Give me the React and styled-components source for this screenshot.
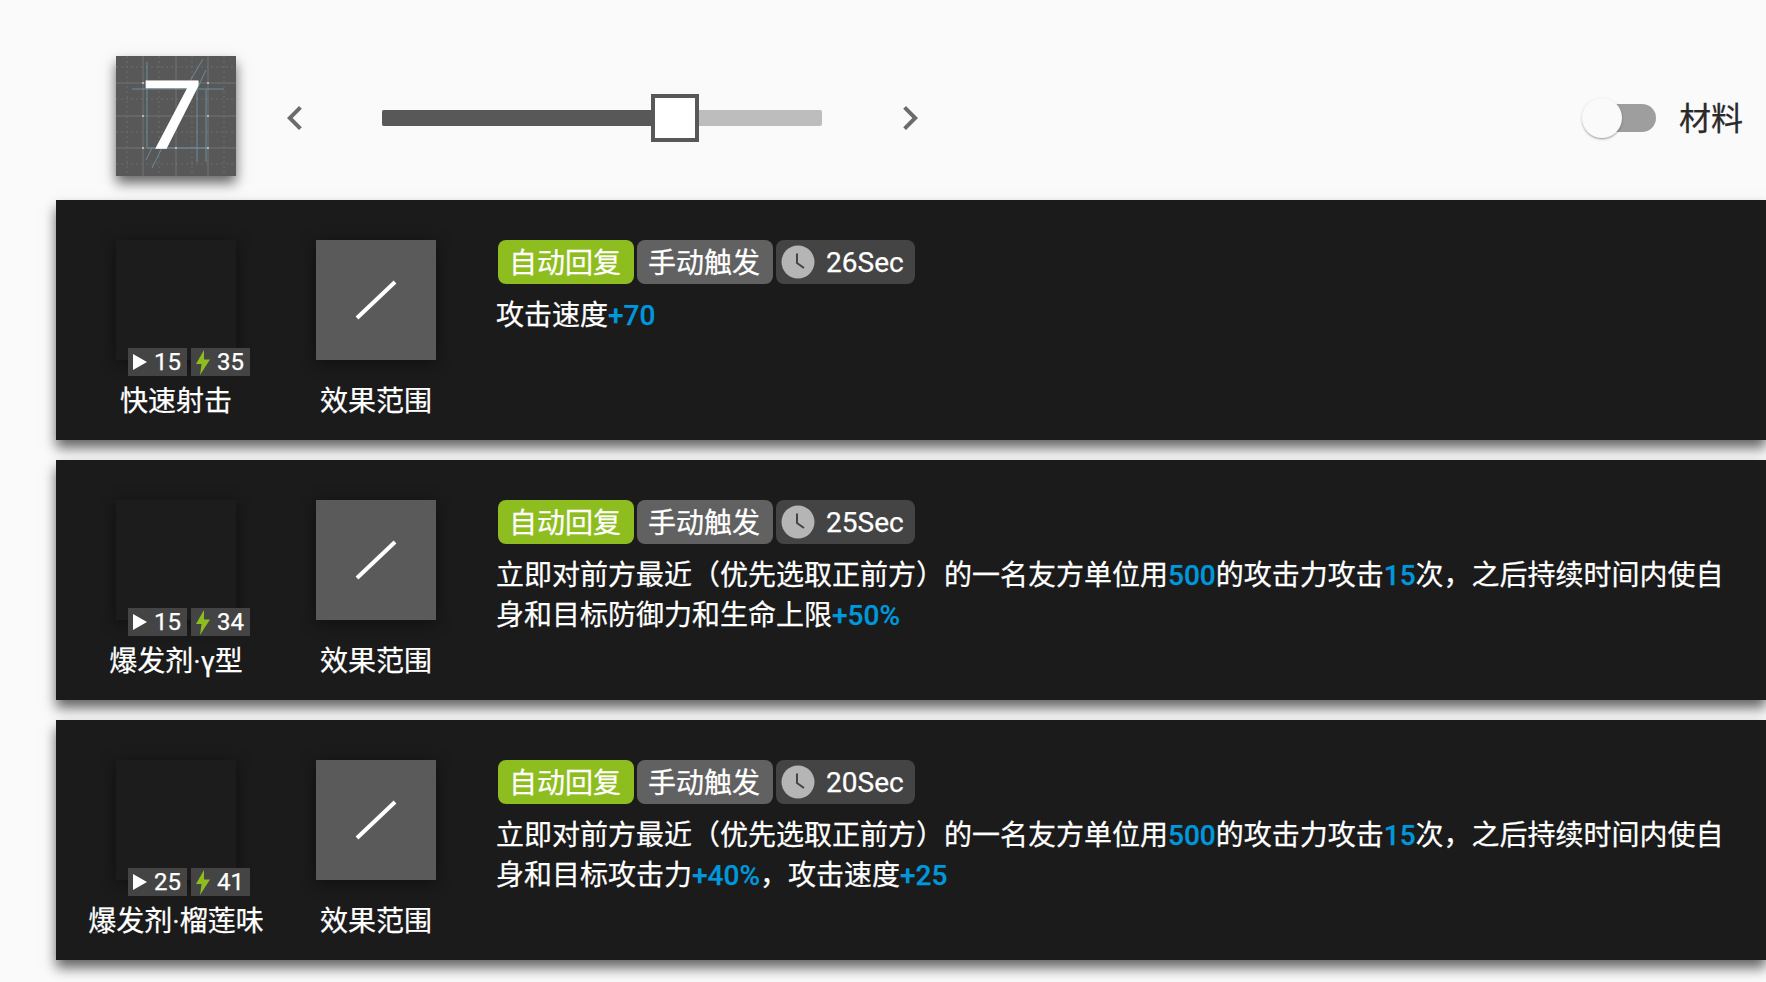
import React from "react";
import styled, { createGlobalStyle } from "styled-components";

const GlobalStyle = createGlobalStyle`
  html, body {
    margin: 0;
    padding: 0;
    background: #fafafa;
    overflow: hidden;
    font-family: Roboto, "Noto Sans CJK SC", sans-serif;
  }
`;

const Page = styled.div`
  width: 1766px;
  height: 982px;
  overflow: hidden;
  background: #fafafa;
  -webkit-text-stroke: 0.25px currentColor;
`;

const Header = styled.div`
  display: flex;
  align-items: center;
  height: 116px;
  padding: 60px 23px 24px 116px;
`;

const LevelIcon = styled.div`
  width: 120px;
  height: 120px;
  flex: none;
  align-self: flex-start;
  margin: -4px 51px 0 0;
  background: #585858;
  box-shadow: 0 7px 12px rgba(0, 0, 0, 0.6);
`;

const Seven = styled.text`
  font-family: Roboto, sans-serif;
  font-size: 94px;
  fill: #fff;
  stroke: #fff;
  stroke-width: 0.7px;
`;

const Chevron = styled.svg`
  width: 16px;
  height: 24px;
  flex: none;
  fill: #6b6b6b;
`;

const Slider = styled.div`
  position: relative;
  width: 440px;
  height: 16px;
  margin: 0 80px 0 79px;
  background: #bdbdbd;
  border-radius: 2px;
`;

const SliderFill = styled.div`
  height: 100%;
  background: #585858;
  border-radius: 2px 0 0 2px;
`;

const SliderThumb = styled.div`
  position: absolute;
  left: 269px;
  top: -16px;
  width: 48px;
  height: 48px;
  box-sizing: border-box;
  border: 4px solid #585858;
  background: #fff;
`;

const Toggle = styled.div`
  position: relative;
  width: 74px;
  height: 40px;
  margin-left: auto;
  display: flex;
  align-items: center;
  justify-content: flex-end;
`;

const ToggleTrack = styled.div`
  width: 68px;
  height: 28px;
  border-radius: 14px;
  background: #9e9e9e;
`;

const ToggleThumb = styled.div`
  position: absolute;
  left: 0;
  top: 0;
  width: 40px;
  height: 40px;
  border-radius: 50%;
  background: #fafafa;
  box-shadow: 0 2px 2px -1px rgba(0, 0, 0, 0.25), 0 1px 3px rgba(0, 0, 0, 0.2);
`;

const ToggleLabel = styled.span`
  margin: 0 0 4px 23px;
  font-size: 32px;
  color: #2a2a2a;
`;

const CardList = styled.div`
  display: flex;
  flex-direction: column;
  gap: 20px;
  margin-left: 56px;
`;

const Card = styled.div`
  display: flex;
  height: 240px;
  box-sizing: border-box;
  padding: 40px 36px 0 60px;
  background: #1b1b1b;
  box-shadow: 0 8px 12px rgba(0, 0, 0, 0.6);
`;

const IconColumn = styled.div`
  display: flex;
  flex-direction: column;
  align-items: center;
  width: 120px;
  flex: none;
  margin-right: 80px;
  &:nth-child(2) {
    margin-right: 60px;
  }
`;

const SkillIcon = styled.div`
  position: relative;
  width: 120px;
  height: 120px;
  flex: none;
  background: #1c1c1c;
  box-shadow: 0 3px 16px rgba(0, 0, 0, 0.45);
`;

const RangeIcon = styled.div`
  width: 120px;
  height: 120px;
  flex: none;
  background: #5a5a5a;
  box-shadow: 0 3px 16px rgba(0, 0, 0, 0.45);
`;

const Badges = styled.div`
  position: absolute;
  left: 12px;
  top: 108px;
  display: flex;
  gap: 4px;
`;

const Badge = styled.div`
  display: flex;
  align-items: center;
  justify-content: space-between;
  box-sizing: border-box;
  width: 59px;
  height: 28px;
  padding: 0 6px 0 5px;
  background: #444;
  color: #fff;
  font-size: 24px;
  line-height: 28px;
`;

const IconName = styled.div`
  margin-top: 22px;
  white-space: nowrap;
  font-size: 28px;
  line-height: 40px;
  color: #fff;
  text-align: center;
`;

const Details = styled.div`
  flex: 1;
  min-width: 0;
`;

const Tags = styled.div`
  display: flex;
  gap: 3px;
  margin-left: 2px;
`;

const Tag = styled.span`
  display: flex;
  align-items: center;
  box-sizing: border-box;
  height: 44px;
  padding: 0 13px 2px 11px;
  border-radius: 8px;
  background: ${(p) => p.$bg};
  color: #fff;
  font-size: 28px;
`;

const TimeTag = styled(Tag)`
  gap: 11px;
  padding: 0 11px 0 5px;
  background: #444;
`;

const Description = styled.div`
  margin-top: 12px;
  font-size: 28px;
  line-height: 40px;
  color: #fff;
`;

const Num = styled.span`
  color: #0098dc;
  font-weight: 500;
`;

const skills = [
  {
    name: "快速射击",
    start: 15,
    cost: 35,
    duration: 26,
    desc: ["攻击速度", <Num key="a">+70</Num>],
  },
  {
    name: "爆发剂·γ型",
    start: 15,
    cost: 34,
    duration: 25,
    desc: [
      "立即对前方最近（优先选取正前方）的一名友方单位用",
      <Num key="a">500</Num>,
      "的攻击力攻击",
      <Num key="b">15</Num>,
      "次，之后持续时间内使自身和目标防御力和生命上限",
      <Num key="c">+50%</Num>,
    ],
  },
  {
    name: "爆发剂·榴莲味",
    start: 25,
    cost: 41,
    duration: 20,
    desc: [
      "立即对前方最近（优先选取正前方）的一名友方单位用",
      <Num key="a">500</Num>,
      "的攻击力攻击",
      <Num key="b">15</Num>,
      "次，之后持续时间内使自身和目标攻击力",
      <Num key="c">+40%</Num>,
      "，攻击速度",
      <Num key="d">+25</Num>,
    ],
  },
];

const LevelArt = () => {
  const major = [27, 60, 92];
  const minor = [11, 43, 76, 108];
  return (
    <svg width="120" height="120" viewBox="0 0 120 120">
      {minor.map((p) => (
        <g key={p} stroke="#6c6c6c" strokeWidth="1" strokeDasharray="2 3">
          <line x1={p} y1="0" x2={p} y2="120" />
          <line x1="0" y1={p} x2="120" y2={p} />
        </g>
      ))}
      {major.map((p) => (
        <g key={p} stroke="#737373" strokeWidth="1">
          <line x1={p} y1="0" x2={p} y2="120" />
          <line x1="0" y1={p} x2="120" y2={p} />
        </g>
      ))}
      <g stroke="#6fb3cf" strokeWidth="1" opacity="0.6">
        <line x1="31" y1="6" x2="31" y2="92" />
        <line x1="81" y1="33" x2="81" y2="106" />
        <line x1="90" y1="33" x2="90" y2="106" />
        <line x1="16" y1="33" x2="108" y2="33" />
        <line x1="31" y1="92" x2="92" y2="92" />
        <line x1="74" y1="25" x2="87" y2="3" />
        <line x1="81" y1="33" x2="90" y2="14" />
        <line x1="36" y1="92" x2="30" y2="104" />
        <line x1="46" y1="92" x2="36" y2="112" />
      </g>
      {major.map((x) =>
        major.map((y) => <circle key={`${x}-${y}`} cx={x} cy={y} r="1" fill="#cfcfcf" />)
      )}
      <Seven transform="translate(26 92) scale(1.15 1)" x="0" y="0">7</Seven>
    </svg>
  );
};

const SkillCard = ({ skill }) => {
  return (
    <Card>
      <IconColumn>
        <SkillIcon>
          <Badges>
            <Badge>
              <svg width="14" height="16" viewBox="0 0 14 16">
                <path d="M0 0L14 8L0 16z" fill="#fff" />
              </svg>
              {skill.start}
            </Badge>
            <Badge>
              <svg width="14" height="25" viewBox="0 0 14 25">
                <path d="M8 0L0 14h5.5L4 25L14 9.5H8z" fill="#8ebd1f" />
              </svg>
              {skill.cost}
            </Badge>
          </Badges>
        </SkillIcon>
        <IconName>{skill.name}</IconName>
      </IconColumn>
      <IconColumn>
        <RangeIcon>
          <svg width="120" height="120" viewBox="0 0 120 120">
            <line x1="41" y1="78" x2="79" y2="42" stroke="#fff" strokeWidth="4" />
          </svg>
        </RangeIcon>
        <IconName>效果范围</IconName>
      </IconColumn>
      <Details>
        <Tags>
          <Tag $bg="#8ebd1f">自动回复</Tag>
          <Tag $bg="#616161">手动触发</Tag>
          <TimeTag>
            <svg width="34" height="34" viewBox="0 0 34 34">
              <circle cx="17" cy="17" r="16.5" fill="#b5b5b5" />
              <path d="M16 8.5v9.5l7 5" fill="none" stroke="#444" strokeWidth="2" />
            </svg>
            {skill.duration}Sec
          </TimeTag>
        </Tags>
        <Description>{skill.desc}</Description>
      </Details>
    </Card>
  );
};

export default function App() {
  return (
    <Page>
      <GlobalStyle />
      <Header>
        <LevelIcon>
          <LevelArt />
        </LevelIcon>
        <Chevron viewBox="8 6 8 12">
          <path d="M15.41 7.41L14 6l-6 6 6 6 1.41-1.41L10.83 12z" />
        </Chevron>
        <Slider>
          <SliderFill style={{ width: "269px" }} />
          <SliderThumb />
        </Slider>
        <Chevron viewBox="8 6 8 12">
          <path d="M10 6L8.59 7.41 13.17 12l-4.58 4.59L10 18l6-6z" />
        </Chevron>
        <Toggle>
          <ToggleTrack />
          <ToggleThumb />
        </Toggle>
        <ToggleLabel>材料</ToggleLabel>
      </Header>
      <CardList>
        {skills.map((s) => (
          <SkillCard key={s.name} skill={s} />
        ))}
      </CardList>
    </Page>
  );
}
